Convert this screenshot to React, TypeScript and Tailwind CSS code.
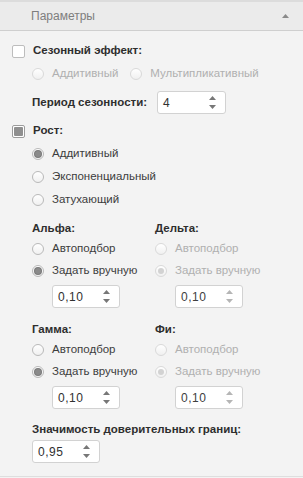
const font = { fontFamily: '"Liberation Sans", Arial, sans-serif' }

const Radio = ({ checked = false, disabled = false }: { checked?: boolean; disabled?: boolean }) => (
  <span
    className={`flex h-[12px] w-[12px] shrink-0 items-center justify-center rounded-full border bg-gradient-to-b from-white to-[#f0f0f0] ${
      disabled ? "border-[#d9d9d9]" : "border-[#b9b9b9]"
    }`}
  >
    {checked && (
      <span
        className={`h-[6px] w-[6px] rounded-full ${disabled ? "bg-[#d2d2d2]" : "bg-[#8a8a8a] ring-1 ring-[#7a7a7a]"}`}
      />
    )}
  </span>
)

const RadioRow = ({
  label,
  checked,
  disabled,
  className = "",
}: {
  label: string
  checked?: boolean
  disabled?: boolean
  className?: string
}) => (
  <div className={`flex h-[18px] items-center gap-[8px] ${className}`}>
    <Radio checked={checked} disabled={disabled} />
    <span className={disabled ? "text-[#b0b0b0]" : "text-[#3c3c3c]"}>{label}</span>
  </div>
)

const Spinner = ({ value, disabled = false, w = "w-[68px]" }: { value: string; disabled?: boolean; w?: string }) => (
  <div
    className={`flex h-[23px] ${w} items-center justify-between rounded-[3px] border border-[#d2d2d2] bg-white pl-[5px] pr-[9px]`}
  >
    <span className={`text-[12px] tracking-[0.5px] ${disabled ? "text-[#404040]" : "text-[#303030]"}`}>{value}</span>
    <span className="flex flex-col items-center gap-[5px]">
      <svg width="7" height="4" viewBox="0 0 7 4">
        <path d="M3.5 0 L7 4 L0 4 Z" fill={disabled ? "#b5b5b5" : "#777"} />
      </svg>
      <svg width="7" height="4" viewBox="0 0 7 4">
        <path d="M0 0 L7 0 L3.5 4 Z" fill={disabled ? "#b5b5b5" : "#777"} />
      </svg>
    </span>
  </div>
)

const Label = ({ children, className = "" }: { children: React.ReactNode; className?: string }) => (
  <div className={`flex h-[18px] items-center font-bold text-[#2e2e2e] ${className}`}>{children}</div>
)

const ParamColumn = ({
  title,
  disabled = false,
  className = "",
}: {
  title: string
  disabled?: boolean
  className?: string
}) => (
  <div className={`flex flex-col ${className}`}>
    <Label>{title}</Label>
    <RadioRow label="Автоподбор" disabled={disabled} className="mt-[2px]" />
    <RadioRow label="Задать вручную" checked disabled={disabled} className="mt-[4px]" />
    <div className="mt-[5px] pl-[20px]">
      <Spinner value="0,10" disabled={disabled} />
    </div>
  </div>
)

export default function App() {
  return (
    <div className="h-[478px] w-[303px] bg-[#f3f3f3] text-[11.5px]" style={font}>
      <div className="flex h-[31px] items-center justify-between border-t-2 border-b border-t-[#dcdcdc] border-b-[#cfcfcf] bg-[#ebebeb] pl-[31px] pr-[14px]">
        <span className="text-[12px] text-[#7e7e7e]">Параметры</span>
        <svg width="7" height="4" viewBox="0 0 7 4">
          <path d="M3.5 0 L7 4 L0 4 Z" fill="#8a8a8a" />
        </svg>
      </div>

      <div className="flex h-[446px] flex-col border-b border-[#dedede] pl-[12px]">
        <div className="mt-[11px] flex h-[18px] items-center gap-[8px]">
          <span className="h-[13px] w-[13px] rounded-[2px] border border-[#bdbdbd] bg-white" />
          <span className="font-bold text-[#2e2e2e]">Сезонный эффект:</span>
        </div>

        <div className="mt-[5px] flex gap-[12px] pl-[20px]">
          <RadioRow label="Аддитивный" disabled />
          <RadioRow label="Мультипликативный" disabled />
        </div>

        <div className="mt-[8px] flex items-center gap-[10px] pl-[20px]">
          <Label>Период сезонности:</Label>
          <Spinner value="4" w="w-[69px]" />
        </div>

        <div className="mt-[8px] flex h-[18px] items-center gap-[8px]">
          <span className="flex h-[13px] w-[13px] items-center justify-center rounded-[2px] border border-[#9c9c9c] bg-white">
            <span className="h-[9px] w-[9px] rounded-[1px] bg-[#8f8f8f]" />
          </span>
          <span className="font-bold text-[#2e2e2e]">Рост:</span>
        </div>

        <div className="flex flex-col gap-[5px] pl-[20px] pt-[5px]">
          <RadioRow label="Аддитивный" checked />
          <RadioRow label="Экспоненциальный" />
          <RadioRow label="Затухающий" />
        </div>

        <div className="mt-[11px] grid grid-cols-[123px_1fr] pl-[20px]">
          <ParamColumn title="Альфа:" />
          <ParamColumn title="Дельта:" disabled />
        </div>

        <div className="mt-[13px] grid grid-cols-[123px_1fr] pl-[20px]">
          <ParamColumn title="Гамма:" />
          <ParamColumn title="Фи:" disabled />
        </div>

        <div className="mt-[12px] flex flex-col pl-[20px]">
          <Label>Значимость доверительных границ:</Label>
          <div className="mt-[1px]">
            <Spinner value="0,95" />
          </div>
        </div>
      </div>
    </div>
  )
}
